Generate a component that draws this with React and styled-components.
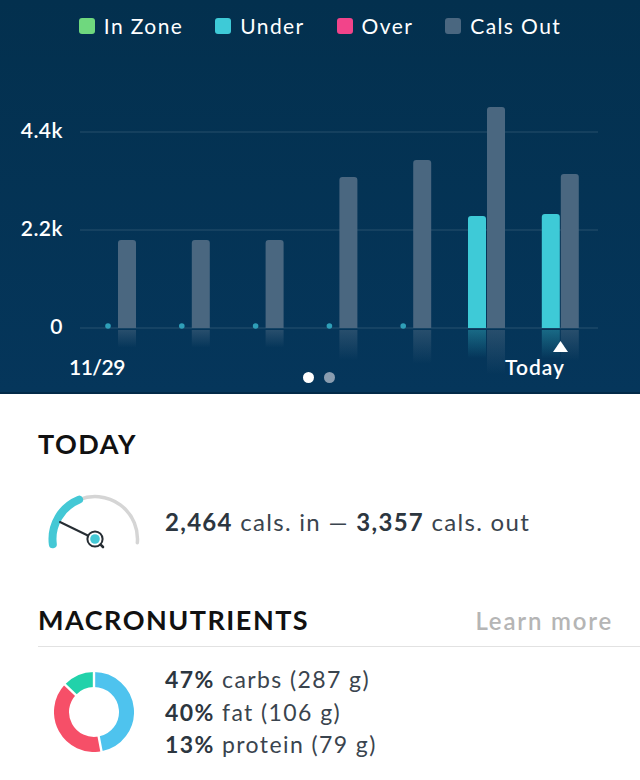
import React from "react";
import styled, { createGlobalStyle } from "styled-components";

const GlobalStyle = createGlobalStyle`
  html, body {
    margin: 0;
    padding: 0;
    background: #ffffff;
  }
  body {
    font-family: "Lato", "Open Sans", sans-serif;
    -webkit-font-smoothing: antialiased;
  }
`;

// Layout
const Page = styled.div`
  width: 640px;
  min-height: 780px;
  background: #ffffff;
`;

const Header = styled.header`
  height: 394px;
  box-sizing: border-box;
  background: linear-gradient(180deg, #03304e 0%, #05365b 100%);
  border-bottom: 2px solid #022a48;
  display: flex;
  flex-direction: column;
`;

const Legend = styled.ul`
  list-style: none;
  margin: 0;
  padding: 14px 0 0;
  display: flex;
  justify-content: center;
  gap: 32px;
`;

const LegendItem = styled.li`
  display: flex;
  align-items: center;
  gap: 9px;
  font-size: 21px;
  line-height: 24px;
  letter-spacing: 1.4px;
  color: #ffffff;
`;

const Swatch = styled.span`
  width: 16px;
  height: 16px;
  border-radius: 3px;
  background: ${(p) => p.$color};
`;

const ChartRow = styled.div`
  display: flex;
  margin-top: 54px;
  height: 260px;
`;

const YAxis = styled.div`
  width: 64px;
  flex-shrink: 0;
  display: flex;
  flex-direction: column;
  align-items: flex-end;
  gap: 74px;
  padding: 26px 1px 0 0;
  box-sizing: border-box;
`;

const AxisLabel = styled.span`
  font-size: 21px;
  line-height: 24px;
  font-weight: 600;
  letter-spacing: 0.5px;
  color: #ffffff;
`;

const Plot = styled.svg`
  display: block;
  overflow: visible;
`;

const XAxis = styled.div`
  display: grid;
  grid-template-columns: 1fr auto 1fr;
  padding: 3px 75px 0 69px;
`;

const XLabel = styled.span`
  font-size: 21px;
  line-height: 24px;
  font-weight: 600;
  letter-spacing: ${(p) => (p.$end ? "1px" : "-0.5px")};
  color: #ffffff;
  justify-self: ${(p) => (p.$end ? "end" : "start")};
`;

const Pager = styled.div`
  display: flex;
  gap: 10px;
  margin: 17px 0 0 3px;
`;

const PagerDot = styled.span`
  width: 11px;
  height: 11px;
  border-radius: 50%;
  background: ${(p) => (p.$active ? "#ffffff" : "#8a9db0")};
`;

const Section = styled.section`
  padding-left: 38px;
`;

const SectionTitle = styled.h2`
  margin: 0;
  font-size: 27px;
  line-height: 32px;
  font-weight: 700;
  letter-spacing: 1.5px;
  color: #111111;
`;

const TodaySection = styled(Section)`
  padding-top: 34px;
`;

const SummaryRow = styled.div`
  display: flex;
  align-items: center;
  margin-top: 31px;
`;

const Gauge = styled.svg`
  display: block;
  margin-left: 9px;
  margin-right: 24px;
  flex-shrink: 0;
`;

const SummaryText = styled.p`
  margin: 2px 0 0;
  font-size: 24px;
  line-height: 28px;
  letter-spacing: 1.3px;
  color: #3a444e;
`;

const Strong = styled.b`
  font-weight: 700;
  color: #2c3640;
`;

const MacroSection = styled(Section)`
  margin-top: 53px;
`;

const MacroHeader = styled.div`
  display: flex;
  justify-content: space-between;
  align-items: baseline;
  padding-bottom: 10px;
  border-bottom: 1px solid #e2e2e2;
`;

const LearnMore = styled.a`
  margin-right: 27px;
  font-size: 24px;
  font-weight: 600;
  letter-spacing: 1.8px;
  color: #b5b5b5;
  text-decoration: none;
`;

const MacroRow = styled.div`
  display: flex;
  align-items: center;
  padding-top: 16px;
`;

const Donut = styled.svg`
  display: block;
  margin-left: 16px;
  margin-right: 31px;
  flex-shrink: 0;
`;

const MacroList = styled.ul`
  list-style: none;
  margin: 0;
  padding: 0;
`;

const MacroLine = styled.li`
  font-size: 23px;
  line-height: 32.5px;
  letter-spacing: 1.4px;
  color: #3a444e;
`;

// Data
const legend = [
  { label: "In Zone", color: "#6fd87e" },
  { label: "Under", color: "#3ecad7" },
  { label: "Over", color: "#f2448a" },
  { label: "Cals Out", color: "#4a6780" },
];

const days = [
  { out: 1975, in: 0 },
  { out: 1975, in: 0 },
  { out: 1975, in: 0 },
  { out: 3390, in: 0 },
  { out: 3770, in: 0 },
  { out: 4960, in: 2514 },
  { out: 3457, in: 2559 },
];

const macros = [
  { pct: 47, name: "carbs", grams: 287, color: "#4ec3ee" },
  { pct: 40, name: "fat", grams: 106, color: "#f64f68" },
  { pct: 13, name: "protein", grams: 79, color: "#21d2aa" },
];

const PX_PER_CAL = 98 / 2200;
const BASE = 236;
const GRAY = "#4a6780";
const CYAN = "#3ecad7";

const topRounded = (x, y, w, h, r) =>
  `M${x},${y + h} L${x},${y + r} Q${x},${y} ${x + r},${y} L${x + w - r},${y} Q${x + w},${y} ${x + w},${y + r} L${x + w},${y + h} Z`;

const CalorieChart = () => (
  <Plot width="576" height="260" viewBox="0 0 576 260">
    <defs>
      <linearGradient id="reflGray" x1="0" y1="0" x2="0" y2="1">
        <stop offset="0" stopColor={GRAY} stopOpacity="0.5" />
        <stop offset="1" stopColor={GRAY} stopOpacity="0" />
      </linearGradient>
      <linearGradient id="reflCyan" x1="0" y1="0" x2="0" y2="1">
        <stop offset="0" stopColor={CYAN} stopOpacity="0.35" />
        <stop offset="1" stopColor={CYAN} stopOpacity="0" />
      </linearGradient>
    </defs>
    {[40, 138, 236].map((y) => (
      <line key={y} x1="16" x2="534" y1={y} y2={y} stroke="#ffffff" strokeOpacity="0.14" strokeWidth="1" />
    ))}
    {days.map((d, i) => {
      const gx = 54 + 73.8 * i;
      const gh = d.out * PX_PER_CAL;
      const ch = d.in * PX_PER_CAL;
      return (
        <g key={i}>
          <path d={topRounded(gx, BASE - gh, 18, gh, 3)} fill={GRAY} />
          <rect x={gx} y={BASE + 2} width="18" height={gh * 0.2} fill="url(#reflGray)" />
          {d.in > 0 ? (
            <>
              <path d={topRounded(gx - 19, BASE - ch, 18, ch, 3)} fill={CYAN} />
              <rect x={gx - 19} y={BASE + 2} width="18" height={ch * 0.25} fill="url(#reflCyan)" />
            </>
          ) : (
            <circle cx={gx - 10} cy={BASE - 2} r="2.8" fill="#2f9fb8" />
          )}
        </g>
      );
    })}
    <polygon points="489,260 504,260 496.5,249" fill="#ffffff" />
  </Plot>
);

const arcPoint = (cx, cy, r, deg) => {
  const a = (deg * Math.PI) / 180;
  return [cx + r * Math.sin(a), cy - r * Math.cos(a)];
};

const ringArc = (start, end) => {
  const [x1, y1] = arcPoint(40, 40, 32.5, start);
  const [x2, y2] = arcPoint(40, 40, 32.5, end);
  const large = end - start > 180 ? 1 : 0;
  return `M${x1},${y1} A32.5,32.5 0 ${large} 1 ${x2},${y2}`;
};

const MacroDonut = () => {
  let acc = 0;
  const segs = macros.map((m) => {
    const start = acc;
    acc += (m.pct / 100) * 360;
    return { ...m, start, end: acc };
  });
  return (
    <Donut width="80" height="80" viewBox="0 0 80 80">
      {segs.map((s) => (
        <path key={s.name} d={ringArc(s.start, s.end)} fill="none" stroke={s.color} strokeWidth="15" />
      ))}
      {segs.map((s) => {
        const [x1, y1] = arcPoint(40, 40, 23, s.start);
        const [x2, y2] = arcPoint(40, 40, 42, s.start);
        return <line key={s.name} x1={x1} y1={y1} x2={x2} y2={y2} stroke="#ffffff" strokeWidth="2.4" />;
      })}
    </Donut>
  );
};

const CalorieGauge = () => (
  <Gauge width="94" height="60" viewBox="0 0 94 60">
    <path d="M32.08,8.59 A42.5,42.5 0 0 1 90.34,51.7" fill="none" stroke="#d5d5d5" strokeWidth="3.5" strokeLinecap="round" />
    <path d="M5.82,53.18 A42.5,42.5 0 0 1 32.08,8.59" fill="none" stroke="#44c8d5" strokeWidth="8" strokeLinecap="round" />
    <line x1="13" y1="31" x2="40.8" y2="44.5" stroke="#262d33" strokeWidth="2" strokeLinecap="round" />
    <circle cx="48" cy="48" r="7.6" fill="#ffffff" stroke="#262d33" strokeWidth="2" />
    <circle cx="48" cy="48" r="4.8" fill="#44c8d5" />
    <line x1="53.6" y1="53.6" x2="56" y2="56" stroke="#262d33" strokeWidth="2.6" strokeLinecap="round" />
  </Gauge>
);

const App = () => {
  return (
    <Page>
      <GlobalStyle />

      {/* Chart header */}
      <Header>
        <Legend>
          {legend.map((l) => (
            <LegendItem key={l.label}>
              <Swatch $color={l.color} />
              {l.label}
            </LegendItem>
          ))}
        </Legend>

        <ChartRow>
          <YAxis>
            <AxisLabel>4.4k</AxisLabel>
            <AxisLabel>2.2k</AxisLabel>
            <AxisLabel>0</AxisLabel>
          </YAxis>
          <CalorieChart />
        </ChartRow>

        <XAxis>
          <XLabel>11/29</XLabel>
          <Pager>
            <PagerDot $active />
            <PagerDot />
          </Pager>
          <XLabel $end>Today</XLabel>
        </XAxis>
      </Header>

      {/* Today */}
      <TodaySection>
        <SectionTitle>TODAY</SectionTitle>
        <SummaryRow>
          <CalorieGauge />
          <SummaryText>
            <Strong>2,464</Strong> cals. in — <Strong>3,357</Strong> cals. out
          </SummaryText>
        </SummaryRow>
      </TodaySection>

      {/* Macros */}
      <MacroSection>
        <MacroHeader>
          <SectionTitle>MACRONUTRIENTS</SectionTitle>
          <LearnMore href="#">Learn more</LearnMore>
        </MacroHeader>
        <MacroRow>
          <MacroDonut />
          <MacroList>
            {macros.map((m) => (
              <MacroLine key={m.name}>
                <Strong>{m.pct}%</Strong> {m.name} ({m.grams} g)
              </MacroLine>
            ))}
          </MacroList>
        </MacroRow>
      </MacroSection>
    </Page>
  );
};

export default App;
